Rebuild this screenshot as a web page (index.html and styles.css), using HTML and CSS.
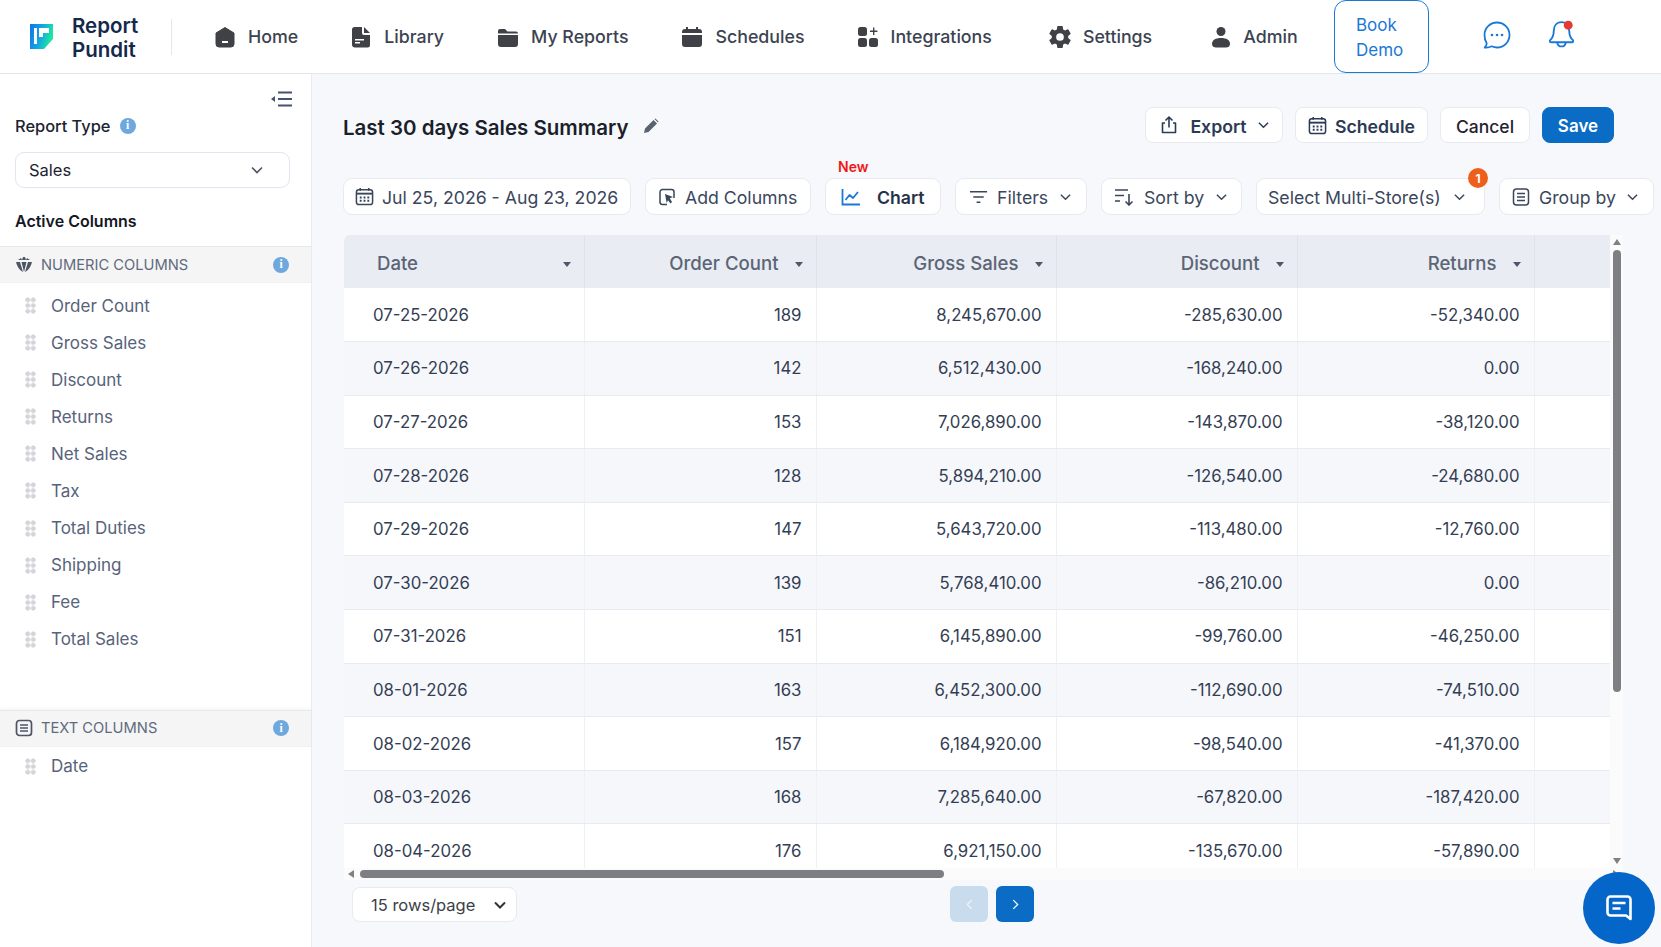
FILE: index.html
```html
<!DOCTYPE html>
<html lang="en">
<head>
<meta charset="utf-8">
<title>Report Pundit</title>
<link rel="stylesheet" href="styles.css">
</head>
<body>
<header class="topbar">
  <div class="brand">
    <svg class="logo" viewBox="0 0 24 25" width="24" height="25"><defs><linearGradient id="lg" x1="0" y1="0" x2="1" y2="0.3"><stop offset="0" stop-color="#1273ea"/><stop offset="0.55" stop-color="#12a8e0"/><stop offset="1" stop-color="#1fe6a0"/></linearGradient></defs><path d="M1 0h23v15l-9 10H1z" fill="url(#lg)"/><path d="M5 4h3v16H5zM10 4h10v5h-6v4h-4z" fill="#fff"/></svg>
    <div class="brand-name">Report<br>Pundit</div>
  </div>
  <nav class="nav">
    <a class="nav-item nav-home"><svg viewBox="0 0 22 22" width="22" height="22"><path d="M11 1.500 20 7v11a3 3 0 0 1-3 3H5a3 3 0 0 1-3-3V7z" fill="#3f4146" stroke="#3f4146" stroke-linejoin="round"/><rect x="8" y="15" width="6" height="2" fill="#fff"/></svg><span>Home</span></a>
    <a class="nav-item nav-library"><svg viewBox="0 0 22 22" width="22" height="22"><path d="M5 1h7v6a2 2 0 0 0 2 2h6v10a2.500 2.500 0 0 1-2.500 2.500h-12.500a3 3 0 0 1-3-3V3.500A2.500 2.500 0 0 1 5 1z" fill="#3f4146"/><path d="M14 1l6 6h-6z" fill="#3f4146"/><path d="M5 13h9v1.500H5zM5 16h5v1.500H5z" fill="#fff"/></svg><span>Library</span></a>
    <a class="nav-item nav-reports"><svg viewBox="0 0 22 22" width="22" height="22"><path d="M1 5a2 2 0 0 1 2-2h5l2.500 2.500H19a2 2 0 0 1 2 2H1z" fill="#3f4146"/><path d="M1 9h20v9a3 3 0 0 1-3 3H4a3 3 0 0 1-3-3z" fill="#3f4146"/></svg><span>My Reports</span></a>
    <a class="nav-item nav-sched"><svg viewBox="0 0 22 22" width="22" height="22"><path d="M5 1h2v3H5zM15 1h2v3h-2z" fill="#3f4146"/><path d="M1 6a3 3 0 0 1 3-3h14a3 3 0 0 1 3 3v1H1zM1 9h20v9a3 3 0 0 1-3 3H4a3 3 0 0 1-3-3z" fill="#3f4146"/></svg><span>Schedules</span></a>
    <a class="nav-item nav-integ"><svg viewBox="0 0 22 22" width="22" height="22"><rect x="1" y="1" width="9" height="9" rx="2.500" fill="#3f4146"/><rect x="1" y="12" width="9" height="9" rx="2.500" fill="#3f4146"/><rect x="12" y="12" width="9" height="9" rx="2.500" fill="#3f4146"/><path d="M16 1.500h1.400v3h3v1.400h-3v3H16v-3h-3V4.500h3z" fill="#3f4146"/></svg><span>Integrations</span></a>
    <a class="nav-item nav-set"><svg viewBox="2 2 20 20" width="22" height="22"><path fill="#3f4146" d="M19.430 12.980c.04-.32.07-.64.07-.98s-.03-.66-.07-.98l2.110-1.650a.5.5 0 0 0 .12-.64l-2-3.460a.5.5 0 0 0-.61-.22l-2.490 1a7.300 7.300 0 0 0-1.690-.98l-.38-2.650A.49.49 0 0 0 14 2h-4a.49.49 0 0 0-.49.42l-.38 2.650c-.61.25-1.170.59-1.690.98l-2.490-1a.5.5 0 0 0-.61.22l-2 3.460a.49.49 0 0 0 .12.64l2.110 1.650c-.04.32-.07.65-.07.98s.03.66.07.98l-2.110 1.650a.5.5 0 0 0-.12.64l2 3.460c.12.22.39.3.61.22l2.490-1c.52.4 1.080.73 1.690.98l.38 2.650c.03.24.24.42.49.42h4c.25 0 .46-.18.49-.42l.38-2.650c.61-.25 1.170-.59 1.690-.98l2.490 1c.23.09.49 0 .61-.22l2-3.460a.5.5 0 0 0-.12-.64zM12 15.500a3.500 3.500 0 1 1 0-7 3.500 3.500 0 0 1 0 7z"/></svg><span>Settings</span></a>
    <a class="nav-item nav-admin"><svg viewBox="0 0 20 22" width="20" height="22"><circle cx="10" cy="5.500" r="4.500" fill="#3f4146"/><path d="M1 18c0-4 3.500-6 9-6s9 2 9 6c0 2.500-2 3.500-4 3.500H5c-2 0-4-1-4-3.500z" fill="#3f4146"/></svg><span>Admin</span></a>
  </nav>
  <a class="demo">Book<br>Demo</a>
  <svg class="chat-ico" viewBox="0 0 30 30" width="30" height="30" fill="none"><path d="M15 2.500c7 0 12.500 5.500 12.500 12.500S22 27.500 15 27.500c-2 0-3.700-.5-5.300-1.200-2 1-4.500 1.500-7 1.200 1.300-1.300 2-2.600 2-4.300C3.300 21 2.500 18 2.500 15 2.500 8 8 2.500 15 2.500z" stroke="#1a78d6" stroke-width="1.800" stroke-linejoin="round"/><circle cx="10" cy="15" r="1.300" fill="#1a78d6"/><circle cx="15" cy="15" r="1.300" fill="#1a78d6"/><circle cx="20" cy="15" r="1.300" fill="#1a78d6"/></svg>
  <svg class="bell-ico" viewBox="0 0 30 30" width="31" height="31" fill="none"><path d="M15 3c-5 0-7.500 4-7.500 8.500 0 5-1.500 7-3.500 9-.7.800-.3 2 1 2h20c1.300 0 1.700-1.200 1-2-2-2-3.500-4-3.500-9C22.500 7 20 3 15 3z" stroke="#1a78d6" stroke-width="1.800" stroke-linejoin="round"/><path d="M11 23c.3 2.200 2 3.500 4 3.500s3.700-1.300 4-3.500" stroke="#1a78d6" stroke-width="1.800"/><circle cx="21.500" cy="6" r="4.300" fill="#e53935"/></svg>
</header>

<div class="body">
  <aside class="side">
    <div class="collapse"><svg viewBox="0 0 22 16" width="22" height="16"><path d="M0 8l4-3v6z" fill="#47536a"/><path d="M7 1.500h14M7 8h14M7 14.500h14" stroke="#47536a" stroke-width="2"/></svg></div>
    <div class="rt-label">Report Type <span class="info">i</span></div>
    <div class="rt-select"><span>Sales</span><svg viewBox="0 0 12 8" width="12" height="8" fill="none"><path d="M1 1.500l5 5 5-5" stroke="#4c5565" stroke-width="1.600"/></svg></div>
    <div class="active-title">Active Columns</div>

    <div class="group-head">
      <svg viewBox="0 0 18 18" width="18" height="18"><path d="M3 4l3-2 1 2zM15 4l-3-2-1 2zM8 1h2l1 3H7zM1 6h4l3 10C4 14 2 10 1 6zM17 6h-4l-3 10c4-2 6-6 7-10zM6.500 6h5L9 16z" fill="#4d5665"/></svg>
      <span>NUMERIC COLUMNS</span><span class="info info-end">i</span>
    </div>
    <ul class="cols">
      <li class="col"><i class="grip"></i>Order Count</li>
      <li class="col"><i class="grip"></i>Gross Sales</li>
      <li class="col"><i class="grip"></i>Discount</li>
      <li class="col"><i class="grip"></i>Returns</li>
      <li class="col"><i class="grip"></i>Net Sales</li>
      <li class="col"><i class="grip"></i>Tax</li>
      <li class="col"><i class="grip"></i>Total Duties</li>
      <li class="col"><i class="grip"></i>Shipping</li>
      <li class="col"><i class="grip"></i>Fee</li>
      <li class="col"><i class="grip"></i>Total Sales</li>
    </ul>

    <div class="group-head group-text">
      <svg viewBox="0 0 18 18" width="18" height="18" fill="none"><rect x="1.500" y="1.500" width="15" height="15" rx="3" stroke="#4d5665" stroke-width="1.700"/><path d="M5 6h8M5 9h8M5 12h8" stroke="#4d5665" stroke-width="1.700"/></svg>
      <span>TEXT COLUMNS</span><span class="info info-end">i</span>
    </div>
    <ul class="cols cols-text">
      <li class="col"><i class="grip"></i>Date</li>
    </ul>
  </aside>

  <main class="main">
    <div class="title-row">
      <h1 class="title">Last 30 days Sales Summary</h1>
      <svg class="pencil" viewBox="0 0 16 16" width="16" height="16"><path d="M1 15l1-4.500L10.500 2l3.500 3.500L5.500 14zM11.500 1l1-.5 3 3-.5 1z" fill="#5a6270"/></svg>
      <div class="actions">
        <button class="btn btn-export"><svg viewBox="0 0 20 20" width="20" height="20" fill="none"><path d="M6 8H3.500v9.500h13V8H14M10 12.500V2.500M6.500 5.500 10 2l3.500 3.500" stroke="#2b3a55" stroke-width="1.600" stroke-linejoin="round"/></svg><b>Export</b><svg class="chev" viewBox="0 0 12 8" width="11" height="8" fill="none"><path d="M1 1.500l5 5 5-5" stroke="#2b3a55" stroke-width="1.600"/></svg></button>
        <button class="btn btn-sched"><svg viewBox="0 0 20 20" width="19" height="19" fill="none"><rect x="1.500" y="3" width="17" height="15.500" rx="2.500" stroke="#2b3a55" stroke-width="1.600"/><path d="M1.500 7h17" stroke="#2b3a55" stroke-width="2"/><path d="M5.500 1v3M14.500 1v3" stroke="#2b3a55" stroke-width="1.600"/><path d="M5 10h2v2H5zM9 10h2v2H9zM13 10h2v2h-2zM5 13.500h2v2H5zM9 13.500h2v2H9zM13 13.500h2v2h-2z" fill="#2b3a55"/></svg><b>Schedule</b></button>
        <button class="btn btn-cancel"><b>Cancel</b></button>
        <button class="btn btn-save">Save</button>
      </div>
    </div>

    <div class="tools">
      <div class="tool t-date"><svg viewBox="0 0 20 20" width="19" height="19" fill="none"><rect x="1.500" y="3" width="17" height="15.500" rx="2.500" stroke="#3a465c" stroke-width="1.600"/><path d="M1.500 7h17" stroke="#3a465c" stroke-width="2"/><path d="M5.500 1v3M14.500 1v3" stroke="#3a465c" stroke-width="1.600"/><path d="M5 10h2v2H5zM9 10h2v2H9zM13 10h2v2h-2zM5 13.500h2v2H5zM9 13.500h2v2H9zM13 13.500h2v2h-2z" fill="#3a465c"/></svg><span>Jul 25, 2026 - Aug 23, 2026</span></div>
      <div class="tool t-add"><svg viewBox="0 0 18 18" width="18" height="18" fill="none"><path d="M16 10V4a2.500 2.500 0 0 0-2.500-2.500h-9A2.500 2.500 0 0 0 2 4v10a2.500 2.500 0 0 0 2.500 2.500H9" stroke="#3a465c" stroke-width="1.500"/><path d="M7 6l8 3-3.200 1.200L14 14l-1.500 1.500-2.500-3.300L8.700 15z" fill="#3a465c"/></svg><span>Add Columns</span></div>
      <div class="tool t-chart"><span class="new">New</span><svg viewBox="0 0 20 18" width="20" height="18" fill="none"><path d="M1.500 1v15.500h17.500" stroke="#1a78d6" stroke-width="1.800"/><path d="M4.500 12l4-5 3.500 3 5-6" stroke="#1a78d6" stroke-width="1.800" stroke-linejoin="round"/></svg><b>Chart</b></div>
      <div class="tool t-filter"><svg viewBox="0 0 20 14" width="19" height="14" fill="none"><path d="M1 1.500h18M4.500 7h11M8 12.500h4" stroke="#3a465c" stroke-width="1.700"/></svg><span>Filters</span><svg class="chev" viewBox="0 0 12 8" width="11" height="8" fill="none"><path d="M1 1.500l5 5 5-5" stroke="#3a465c" stroke-width="1.600"/></svg></div>
      <div class="tool t-sort"><svg viewBox="0 0 20 18" width="20" height="18" fill="none"><path d="M1 2h13M1 7.500h9M1 13h5M15 6v11M11.500 13.500 15 17l3.500-3.500" stroke="#3a465c" stroke-width="1.600"/></svg><span>Sort by</span><svg class="chev" viewBox="0 0 12 8" width="11" height="8" fill="none"><path d="M1 1.500l5 5 5-5" stroke="#3a465c" stroke-width="1.600"/></svg></div>
      <div class="tool t-store"><span>Select Multi-Store(s)</span><svg class="chev" viewBox="0 0 12 8" width="11" height="8" fill="none"><path d="M1 1.500l5 5 5-5" stroke="#3a465c" stroke-width="1.600"/></svg><span class="badge">1</span></div>
      <div class="tool t-group"><svg viewBox="0 0 18 18" width="18" height="18" fill="none"><rect x="1.500" y="1" width="15" height="16" rx="3" stroke="#3a465c" stroke-width="1.500"/><path d="M5 5.500h8M5 9h8M5 12.500h8" stroke="#3a465c" stroke-width="1.500"/></svg><span>Group by</span><svg class="chev" viewBox="0 0 12 8" width="11" height="8" fill="none"><path d="M1 1.500l5 5 5-5" stroke="#3a465c" stroke-width="1.600"/></svg></div>
    </div>

    <div class="grid-wrap">
      <div class="viewport">
        <table class="data">
          <colgroup><col class="c1"><col class="c2"><col class="c3"><col class="c4"><col class="c5"><col class="c6"></colgroup>
          <thead>
            <tr>
              <th class="th-left"><div class="th"><span>Date</span><i class="caret"></i></div></th>
              <th><div class="th"><span>Order Count</span><i class="caret"></i></div></th>
              <th><div class="th"><span>Gross Sales</span><i class="caret"></i></div></th>
              <th><div class="th"><span>Discount</span><i class="caret"></i></div></th>
              <th><div class="th"><span>Returns</span><i class="caret"></i></div></th>
              <th></th>
            </tr>
          </thead>
          <tbody>
            <tr><td>07-25-2026</td><td>189</td><td>8,245,670.00</td><td>-285,630.00</td><td>-52,340.00</td><td></td></tr>
            <tr><td>07-26-2026</td><td>142</td><td>6,512,430.00</td><td>-168,240.00</td><td>0.00</td><td></td></tr>
            <tr><td>07-27-2026</td><td>153</td><td>7,026,890.00</td><td>-143,870.00</td><td>-38,120.00</td><td></td></tr>
            <tr><td>07-28-2026</td><td>128</td><td>5,894,210.00</td><td>-126,540.00</td><td>-24,680.00</td><td></td></tr>
            <tr><td>07-29-2026</td><td>147</td><td>5,643,720.00</td><td>-113,480.00</td><td>-12,760.00</td><td></td></tr>
            <tr><td>07-30-2026</td><td>139</td><td>5,768,410.00</td><td>-86,210.00</td><td>0.00</td><td></td></tr>
            <tr><td>07-31-2026</td><td>151</td><td>6,145,890.00</td><td>-99,760.00</td><td>-46,250.00</td><td></td></tr>
            <tr><td>08-01-2026</td><td>163</td><td>6,452,300.00</td><td>-112,690.00</td><td>-74,510.00</td><td></td></tr>
            <tr><td>08-02-2026</td><td>157</td><td>6,184,920.00</td><td>-98,540.00</td><td>-41,370.00</td><td></td></tr>
            <tr><td>08-03-2026</td><td>168</td><td>7,285,640.00</td><td>-67,820.00</td><td>-187,420.00</td><td></td></tr>
            <tr><td>08-04-2026</td><td>176</td><td>6,921,150.00</td><td>-135,670.00</td><td>-57,890.00</td><td></td></tr>
          </tbody>
        </table>
      </div>
      <div class="vbar"><i class="arrow up"></i><div class="vtrack"><i class="vthumb"></i></div><i class="arrow down"></i></div>
      <div class="hbar"><i class="arrow left"></i><div class="htrack"><i class="hthumb"></i></div><i class="arrow right"></i></div>
    </div>

    <div class="pager">
      <div class="rows-select"><span>15 rows/page</span><svg viewBox="0 0 12 8" width="12" height="8" fill="none"><path d="M1 1.500l5 5 5-5" stroke="#333" stroke-width="2"/></svg></div>
      <div class="pages">
        <button class="pg pg-off"><svg viewBox="0 0 8 12" width="7" height="11" fill="none"><path d="M6.500 1 1.500 6l5 5" stroke="#eef3f9" stroke-width="1.500"/></svg></button>
        <button class="pg"><svg viewBox="0 0 8 12" width="7" height="11" fill="none"><path d="M1.500 1l5 5-5 5" stroke="#fff" stroke-width="1.500"/></svg></button>
      </div>
    </div>
  </main>
</div>

<button class="fab"><svg viewBox="0 0 30 30" width="30" height="30" fill="none"><path d="M6.500 3.500h17a3 3 0 0 1 3 3V26l-4.500-3.500H6.500a3 3 0 0 1-3-3v-13a3 3 0 0 1 3-3z" stroke="#fff" stroke-width="2.600" stroke-linejoin="round"/><path d="M8.500 10h13M8.500 15.500h8" stroke="#fff" stroke-width="2.600"/></svg></button>
</body>
</html>
```

FILE: styles.css
```css
* { box-sizing: border-box; }
html, body { margin: 0; padding: 0; }
body {
  width: 1661px; height: 947px; overflow: hidden; position: relative;
  font-family: Inter, "Liberation Sans", sans-serif;
  background: #f7f8fb; color: #2f3a4f;
}
ul { list-style: none; margin: 0; padding: 0; }
button { font-family: inherit; cursor: pointer; }
svg { flex: none; }

/* top bar */
.topbar {
  height: 74px; background: #fff; border-bottom: 1px solid #e4e6ea;
  display: flex; align-items: center;
}
.brand { display: flex; align-items: center; width: 172px; height: 36px; padding-left: 29px; border-right: 1px solid #e6e7ea; }
.logo { flex: none; }
.brand-name { margin-left: 19px; padding-top: 3px; font-size: 20.500px; line-height: 24.500px; font-weight: 600; color: #14294a; }
.nav { display: flex; align-items: center; margin-left: 42px; width: 1120px; }
.nav-item { display: flex; align-items: center; gap: 12px; font-size: 17.800px; font-weight: 500; color: #3c4350; flex: none; }
.nav-library { margin-left: 52px; }
.nav-reports { margin-left: 53px; }
.nav-sched { margin-left: 53px; }
.nav-integ { margin-left: 52px; }
.nav-set { margin-left: 57px; }
.nav-admin { margin-left: 59px; }
.demo {
  flex: none; width: 95px; height: 73px; padding: 2px 0 0 21px;
  display: flex; align-items: center;
  border: 1.700px solid #1a78d6; border-radius: 12px;
  color: #1a78d6; font-size: 17px; line-height: 24.500px;
}
.chat-ico { margin: 0 0 4px 53px; flex: none; }
.bell-ico { margin: 0 0 5px 34px; flex: none; }

.body { display: flex; height: 873px; }

/* sidebar */
.side { width: 312px; flex: none; background: #fff; border-right: 1px solid #e9ebf0; position: relative; }
.collapse { height: 16px; margin: 17px 0 0 271px; display: flex; }
.rt-label { margin: 9px 0 0 15px; display: flex; align-items: center; gap: 9px; font-size: 16.400px; font-weight: 500; color: #1d2330; height: 20px; }
.info {
  width: 16px; height: 16px; border-radius: 50%; background: #6fa8dc; color: #fff;
  display: inline-flex; align-items: center; justify-content: center;
  font: 700 11.500px/1 "Liberation Serif", serif;
}
.rt-select {
  margin: 16px 0 0 15px; width: 275px; height: 36px; border: 1.500px solid #e3e5f0; border-radius: 9px;
  display: flex; align-items: center; justify-content: space-between; padding: 0 26px 0 13px;
  font-size: 16.500px; color: #1d2330;
}
.active-title { margin: 23px 0 0 15px; font-size: 16px; font-weight: 600; color: #14181f; height: 20px; line-height: 20px; }
.group-head {
  margin-top: 15px; height: 37px; background: #f5f5f6; border-top: 1px solid #e6e7ea; border-bottom: 1px solid #f0f0f2;
  display: flex; align-items: center; padding: 0 22px 0 15px; gap: 8px;
  font-size: 14.700px; color: #5f6b7d;
}
.info-end { margin-left: auto; }
.group-text { margin-top: 52px; box-shadow: 0 -2px 3px rgba(0,0,0,.03); }
.cols { padding-top: 4px; }
.cols-text { padding-top: 1px; }
.col { height: 37.080px; display: flex; align-items: center; font-size: 17px; color: #57637b; padding-left: 25px; }
.grip {
  width: 11px; height: 17px; margin-right: 15px; flex: none;
  background-image: radial-gradient(circle, #d4d5da 2.200px, transparent 2.700px);
  background-size: 5.500px 5.700px;
}

/* main */
.main { flex: 1; padding: 0 0 0 31px; min-width: 0; }
.title-row { display: flex; align-items: center; height: 36px; margin-top: 33px; }
.title { margin: 0; padding-top: 6px; font-size: 20.500px; font-weight: 600; color: #1a1f2b; line-height: 36px; }
.pencil { margin-left: 14px; margin-top: 1px; }
.actions { margin-left: auto; margin-right: 47px; display: flex; gap: 12px; }
.btn {
  height: 36px; background: #fff; border: 1px solid #e8eaf0; border-radius: 8px;
  display: flex; align-items: center; justify-content: center; padding: 2px 0 0; color: #2b3a55; font-size: 17.700px;
}
.btn svg { margin-top: -2px; }
.btn b { font-weight: 600; }
.btn-export { width: 138px; gap: 11px; }
.btn-sched { width: 133px; gap: 8px; }
.btn-cancel { width: 90px; color: #1f2430; font-size: 17.500px; }
.btn-cancel b { font-weight: 500; }
.btn-save { width: 72px; background: #0a6cc4; border-color: #0a6cc4; color: #fff; font-weight: 600; font-size: 17px; }

.tools { display: flex; margin-top: 35px; gap: 14px; height: 37px; }
.tool {
  position: relative; flex: none; height: 37px; background: #fff; border: 1px solid #e8eaf0; border-radius: 9px;
  display: flex; align-items: center; padding: 0 15px 0 13px; gap: 8px; font-size: 17.700px; color: #3a465c;
  white-space: nowrap;
}
.tool > span:not(.new):not(.badge), .tool b { padding-top: 2px; }
.tool .chev { margin-left: auto; }
.tool b { font-weight: 600; color: #26324a; }
.t-date { width: 288px; padding: 0 0 0 11px; }
.t-add { width: 166px; gap: 9px; padding: 0 0 0 12px; }
.t-chart { width: 116px; gap: 16px; padding-left: 15px; }
.t-filter { width: 132px; gap: 9px; padding-left: 13px; }
.t-sort { width: 141px; gap: 10px; padding-left: 12px; padding-right: 14px; }
.t-store { width: 229px; padding-left: 11px; padding-right: 19px; }
.t-group { width: 155px; gap: 9px; padding-left: 12px; }
.new { position: absolute; left: 12px; top: -21px; font-size: 14px; font-weight: 600; color: #f01616; }
.badge {
  position: absolute; right: -4px; top: -11px; width: 20px; height: 20px; border-radius: 50%;
  background: #ef5f1c; color: #fff; font-size: 12px; font-weight: 700;
  display: flex; align-items: center; justify-content: center;
}

/* table */
.grid-wrap {
  margin: 20px 0 0 1px; width: 1279px; height: 645px; background: #f9f9fb;
  display: grid; grid-template-columns: 1266px 13px; grid-template-rows: 633px 12px;
}
.viewport { overflow: hidden; border-radius: 6px 0 0 0; }
.data { width: 1400px; table-layout: fixed; border-collapse: collapse; font-size: 16.800px; }
.c1 { width: 240px; } .c2 { width: 232px; } .c3 { width: 240px; } .c4 { width: 241px; } .c5 { width: 237px; } .c6 { width: 210px; }
.data th { height: 53px; background: #e9ecf2; font-weight: 500; color: #5b6577; font-size: 18.600px; border-right: 1px solid #dfe2e8; padding: 2px 13px 0 33px; }
.th { display: flex; justify-content: flex-end; align-items: center; gap: 16px; }
.th-left .th { justify-content: space-between; }
.caret { width: 0; height: 0; border: 4.500px solid transparent; border-top: 5px solid #4f5868; border-bottom: 0; margin-top: 3px; flex: none; }
.data td { height: 53.600px; padding: 0 14px; text-align: right; color: #333e54; background: #fff; border-right: 1px solid #eef0f3; border-bottom: 1.500px solid #e8eaef; }
.data td:first-child { text-align: left; padding-left: 29px; }
.data tbody tr:nth-child(even) td { background: #f6f7fb; }

.vbar { grid-column: 2; grid-row: 1; background: #fbfbfc; display: flex; flex-direction: column; align-items: center; padding: 4px 0; }
.vtrack { flex: 1; width: 100%; padding: 5px 2px 0; }
.vthumb { display: block; width: 8px; height: 442px; border-radius: 4px; background: #7e7f82; margin: 0 auto; }
.hbar { grid-column: 1 / 3; grid-row: 2; background: #fbfbfc; display: flex; align-items: center; padding: 0 4px; }
.htrack { flex: 1; padding: 0 6px; height: 8px; }
.hthumb { display: block; width: 584px; height: 8px; border-radius: 4px; background: #7e7f82; }
.arrow { width: 0; height: 0; flex: none; border: 4px solid transparent; }
.up { border-top: 0; border-bottom: 6px solid #808080; }
.down { border-bottom: 0; border-top: 6px solid #808080; }
.left { border-left: 0; border-right: 6px solid #808080; }
.right { border-right: 0; border-left: 6px solid #808080; }

/* pager */
.pager { display: flex; align-items: center; height: 36px; margin-top: 6px; padding-left: 9px; }
.rows-select {
  width: 165px; height: 35px; background: #fff; border: 1px solid #e8eaf0; border-radius: 8px;
  display: flex; align-items: center; justify-content: space-between; padding: 2px 10px 0 18px; font-size: 16.500px; color: #3b3f46;
}
.pages { display: flex; gap: 8px; margin-left: 433px; }
.pg { width: 38px; height: 36px; border: 0; border-radius: 6px; background: #0a6cc4; display: flex; align-items: center; justify-content: center; padding: 0; }
.pg-off { background: #c9dcee; }

.fab {
  position: absolute; left: 1583px; top: 872px; width: 72px; height: 72px; border-radius: 50%; border: 0; padding: 0 0 1px;
  background: #0566c9; display: flex; align-items: center; justify-content: center;
}
```
